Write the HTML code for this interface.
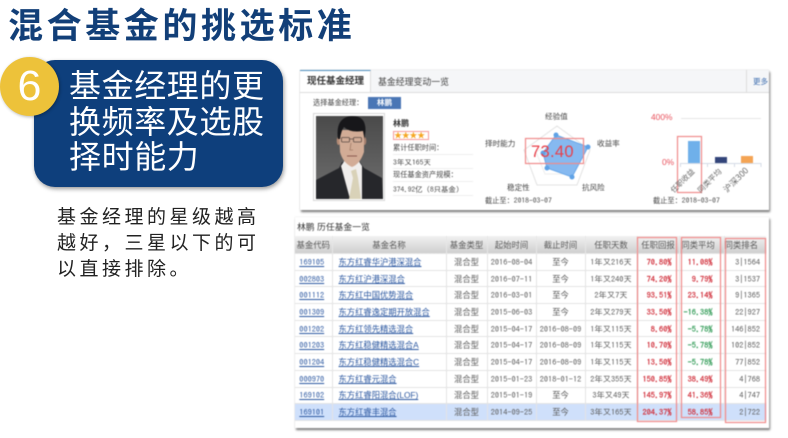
<!DOCTYPE html>
<html lang="zh-CN">
<head>
<meta charset="utf-8">
<title>混合基金的挑选标准</title>
<style>
html,body{margin:0;padding:0;background:#fff}
#s{position:relative;width:788px;height:438px;overflow:hidden;background:#fff;font-family:"Liberation Sans","Noto Sans CJK SC",sans-serif}
.a{position:absolute;white-space:nowrap}
#title{left:8px;top:4px;font-size:35px;line-height:46px;font-weight:700;letter-spacing:3.6px;color:#123f78}
#box{left:34px;top:60px;width:249px;height:127px;border-radius:21px;background:#0e3f7c;box-shadow:1px 2px 4px rgba(0,0,0,.4)}
#circle{left:0;top:57px;width:59px;height:59px;border-radius:50%;background:#edc23a;box-shadow:1px 1px 3px rgba(0,0,0,.3);color:#fff;font-size:43px;line-height:58px;text-align:center}
#head{left:69px;top:69px;font-size:32px;line-height:35.7px;color:#fff;letter-spacing:.6px;font-weight:400}
#desc{left:57px;top:205px;font-size:19px;line-height:26px;letter-spacing:3.5px;color:#222}
#p1{left:300px;top:70px;width:469px;height:140px;background:#fff;box-shadow:0 0 1px #bbb,1px 2px 2px rgba(0,0,0,.55);filter:blur(.4px);overflow:hidden}
#p1 .a{font-size:7.6px;color:#444;line-height:12px}
#tabs{left:0;top:0;width:469px;height:22px;background:#f5f6f8;border-bottom:1px solid #ddd}
#tab{left:0;top:0;width:71px;height:22px;background:#fff;border-top:1px solid #4f8fc0;border-right:1px solid #ddd;box-sizing:border-box}
#p2{left:295px;top:217px;width:474px;height:211px;background:#fff;box-shadow:0 0 1px #ccc,1px 2px 2px rgba(0,0,0,.55);filter:blur(.4px);overflow:hidden}
table{position:absolute;left:0;top:19px;border-collapse:collapse;table-layout:fixed;width:471px;font-size:8.3px;color:#5a5a5a}
th{height:17px;padding:0;font-weight:400;color:#5a5a5a;background:linear-gradient(#f2f2f2,#cfcfcf);border-right:1px solid #e6e6e6;font-size:8.4px}
td{height:15.7px;padding:0;border:1px solid #e4e4e4;border-left:0;text-align:center;overflow:hidden;white-space:nowrap}
td:last-child,th:last-child{border-right:0}
.n{font-family:"IPAGothic","Noto Sans CJK SC",monospace}
.l{color:#2b57a0;text-decoration:underline}
.c{padding-right:3px}
.nm{text-align:left;padding-left:6px}
.r{text-align:right;font-family:"IPAGothic","Noto Sans CJK SC",monospace;color:#d02c38;font-weight:400;-webkit-text-stroke:.2px currentColor}
.r1{padding-right:7px}.r2{padding-right:11px}
.g{color:#2f9a55}
.k{text-align:right;padding-right:6px;font-family:"IPAGothic",monospace}
.sel td{background:#cfe0fb}
svg{position:absolute;left:0;top:0}
svg text{font-family:"Noto Sans CJK SC",sans-serif}
</style>
</head>
<body>
<div id="s">
<div class="a" id="title">混合基金的挑选标准</div>
<div class="a" id="box"></div>
<div class="a" id="circle">6</div>
<div class="a" id="head">基金经理的更<br>换频率及选股<br>择时能力</div>
<div class="a" id="desc">基金经理的星级越高<br>越好，三星以下的可<br>以直接排除。</div>

<div class="a" id="p1">
  <div class="a" id="tabs"></div>
  <div class="a" id="tab"></div>
  <div class="a" style="left:7px;top:6px;font-weight:700;color:#333;font-size:9.5px">现任基金经理</div>
  <div class="a" style="left:78px;top:6px;font-size:8.9px">基金经理变动一览</div>
  <div class="a" style="left:446px;top:0;width:1px;height:22px;background:#ddd"></div>
  <div class="a" style="left:453px;top:6px;color:#3f6fb0;font-size:7.5px">更多</div>
  <div class="a" style="left:13px;top:27px;font-size:7.2px">选择基金经理：</div>
  <div class="a" style="left:68px;top:27px;width:33px;height:12px;background:#4a76b5;color:#fff;font-weight:700;text-align:center">林鹏</div>
  <div class="a" style="left:93px;top:48px;font-weight:700;color:#333;font-size:8px">林鹏</div>
  <div class="a" style="left:93px;top:61px;width:36px;height:9px;border:1px solid #f59a9a;box-sizing:border-box;color:#f5a623;font-size:8px;line-height:7px;letter-spacing:-.3px;overflow:hidden">★★★★</div>
  <div class="a" style="left:93px;top:72px;font-size:7.2px">累计任职时间：</div>
  <div class="a n" style="left:93px;top:86px;font-size:7.6px">3年又165天</div>
  <div class="a" style="left:93px;top:99px;font-size:7.2px">现任基金资产规模：</div>
  <div class="a n" style="left:93px;top:113px;font-size:7.4px">374.92亿 (8只基金)</div>
  <div class="a" style="left:93px;top:84px;width:80px;height:1px;background:#eee"></div>
  <div class="a" style="left:93px;top:98px;width:80px;height:1px;background:#eee"></div>
  <div class="a" style="left:93px;top:111px;width:80px;height:1px;background:#eee"></div>
  <div class="a" style="left:93px;top:125px;width:80px;height:1px;background:#eee"></div>
  <div class="a" style="left:245px;top:41px">经验值</div>
  <div class="a" style="left:297px;top:68px">收益率</div>
  <div class="a" style="left:282px;top:112px">抗风险</div>
  <div class="a" style="left:207px;top:112px">稳定性</div>
  <div class="a" style="left:185px;top:68px">择时能力</div>
  <div class="a" style="left:185px;top:124px;font-size:7.2px">截止至：<span class="n" style="font-size:7.6px">2018-03-07</span></div>
  <div class="a" style="left:353px;top:124px;font-size:7.2px">截止至：<span class="n" style="font-size:7.6px">2018-03-07</span></div>
  <div class="a" style="left:351px;top:41px;color:#e8505b;font-size:8.4px">400%</div>
  <div class="a" style="left:362px;top:86px;color:#e8505b;font-size:8.4px">0%</div>
</div>

<div class="a" id="p2">
  <div class="a" style="left:2px;top:3px;font-size:8.8px;line-height:15px;color:#333">林鹏 历任基金一览</div>
  <table>
    <colgroup><col style="width:37px"><col style="width:114px"><col style="width:41px"><col style="width:49px"><col style="width:49px"><col style="width:52px"><col style="width:42px"><col style="width:45px"><col style="width:42px"></colgroup>
    <tr><th>基金代码</th><th>基金名称</th><th>基金类型</th><th>起始时间</th><th>截止时间</th><th>任职天数</th><th>任职回报</th><th style="padding-right:7px">同类平均</th><th style="padding-right:12px">同类排名</th></tr>
    <tr><td class="n l c">169105</td><td class="nm l">东方红睿华沪港深混合</td><td>混合型</td><td class="n">2016-08-04</td><td>至今</td><td class="n">1年又216天</td><td class="r r1">70.80%</td><td class="r r2">11.08%</td><td class="k">3|1564</td></tr>
    <tr><td class="n l c">002803</td><td class="nm l">东方红沪港深混合</td><td>混合型</td><td class="n">2016-07-11</td><td>至今</td><td class="n">1年又240天</td><td class="r r1">74.20%</td><td class="r r2">9.79%</td><td class="k">3|1537</td></tr>
    <tr><td class="n l c">001112</td><td class="nm l">东方红中国优势混合</td><td>混合型</td><td class="n">2016-03-01</td><td>至今</td><td class="n">2年又7天</td><td class="r r1">93.51%</td><td class="r r2">23.14%</td><td class="k">9|1365</td></tr>
    <tr><td class="n l c">001309</td><td class="nm l">东方红睿逸定期开放混合</td><td>混合型</td><td class="n">2015-06-03</td><td>至今</td><td class="n">2年又279天</td><td class="r r1">33.50%</td><td class="r r2 g">-16.38%</td><td class="k">22|927</td></tr>
    <tr><td class="n l c">001202</td><td class="nm l">东方红领先精选混合</td><td>混合型</td><td class="n">2015-04-17</td><td class="n">2016-08-09</td><td class="n">1年又115天</td><td class="r r1">8.60%</td><td class="r r2 g">-5.78%</td><td class="k">146|852</td></tr>
    <tr><td class="n l c">001203</td><td class="nm l">东方红稳健精选混合A</td><td>混合型</td><td class="n">2015-04-17</td><td class="n">2016-08-09</td><td class="n">1年又115天</td><td class="r r1">10.70%</td><td class="r r2 g">-5.78%</td><td class="k">102|852</td></tr>
    <tr><td class="n l c">001204</td><td class="nm l">东方红稳健精选混合C</td><td>混合型</td><td class="n">2015-04-17</td><td class="n">2016-08-09</td><td class="n">1年又115天</td><td class="r r1">13.50%</td><td class="r r2 g">-5.78%</td><td class="k">77|852</td></tr>
    <tr><td class="n l c">000970</td><td class="nm l">东方红睿元混合</td><td>混合型</td><td class="n">2015-01-23</td><td class="n">2018-01-12</td><td class="n">2年又355天</td><td class="r r1">150.85%</td><td class="r r2">38.49%</td><td class="k">4|768</td></tr>
    <tr><td class="n l c">169102</td><td class="nm l">东方红睿阳混合(LOF)</td><td>混合型</td><td class="n">2015-01-19</td><td>至今</td><td class="n">3年又49天</td><td class="r r1">145.97%</td><td class="r r2">41.36%</td><td class="k">4|747</td></tr>
    <tr class="sel"><td class="n l c">169101</td><td class="nm l">东方红睿丰混合</td><td>混合型</td><td class="n">2014-09-25</td><td>至今</td><td class="n">3年又165天</td><td class="r r1">204.37%</td><td class="r r2">58.85%</td><td class="k">2|722</td></tr>
  </table>
</div>

<svg width="788" height="438" viewBox="0 0 788 438" style="filter:blur(.4px)">
  <!-- portrait frame -->
  <rect x="313.500" y="113.500" width="71" height="87" fill="#fff" stroke="#d8d8d8"/>
  <defs><linearGradient id="bg" x1="0" y1="0" x2="0" y2="1"><stop offset="0" stop-color="#4a4a4a"/><stop offset="1" stop-color="#707070"/></linearGradient></defs>
  <rect x="316" y="116" width="67" height="83" fill="url(#bg)"/>
  <path d="M316 199V180L339 168L342 162H360L364 168L382 178L383 199Z" fill="#26272b"/>
  <path d="M341 166L350 199H362L362 166L358 160H345Z" fill="#f0eeec"/>
  <path d="M351 171L356 169L358 178L361 199H349L353 178Z" fill="#d9d2b8"/>
  <ellipse cx="338.500" cy="141" rx="1.800" ry="4" fill="#b48c76"/><ellipse cx="364.500" cy="141" rx="1.800" ry="4" fill="#a88270"/>
  <path d="M339 130H364L364 152Q360 164 352 167Q343 163 340 152Z" fill="#d2ac96"/>
  <path d="M338 139Q335 118 351 116Q366 115 365.500 131L364.500 139L363 131Q350 133 344 127Q341 131 340 139Z" fill="#17171a"/>
  <rect x="341.500" y="137.500" width="8" height="4.500" rx="1" fill="none" stroke="#5a4a44" stroke-width=".8"/>
  <rect x="353.500" y="137.500" width="8" height="4.500" rx="1" fill="none" stroke="#5a4a44" stroke-width=".8"/>
  <path d="M349.500 139H353.500" stroke="#5a4a44" stroke-width=".7"/>
  <path d="M351 143L350 150H353" stroke="#a27c68" stroke-width=".8" fill="none"/>
  <path d="M347 156H357" stroke="#8b5b50" stroke-width="1"/>
  <!-- radar -->
  <path d="M557 126L590 150L577 185L537 185L524 150Z" fill="#fff" stroke="#e2e2e2"/>
  <path d="M557 140L576 152L569 174L545 174L536 152Z" fill="none" stroke="#eee"/>
  <path d="M556 135L588 147L572 177L547 168L543 153Z" fill="#86b9f0" stroke="#6aa7e8"/>
  <circle cx="556" cy="135" r="2.500" fill="#5fa2e6"/><circle cx="588" cy="147" r="2.500" fill="#5fa2e6"/><circle cx="572" cy="177" r="2.500" fill="#5fa2e6"/><circle cx="547" cy="168" r="2.500" fill="#5fa2e6"/><circle cx="543" cy="153" r="2.500" fill="#5fa2e6"/>
  <rect x="525.500" y="138.500" width="58" height="25" fill="none" stroke="#f08a8a" stroke-width="1.200"/>
  <text x="531" y="157" font-size="16.500" fill="#e8404a" letter-spacing=".3" style="font-family:'Liberation Sans',sans-serif">73.40</text>
  <!-- bars -->
  <path d="M681 118.500H761" stroke="#e6e6e6"/>
  <path d="M680 163.500H761M680.500 163V167M707.500 163V167M734.500 163V167M761 163V167" stroke="#d5dbe6" fill="none"/>
  <rect x="688" y="141" width="12" height="22" fill="#6fb0ea"/>
  <rect x="715" y="157" width="12" height="6" fill="#33457a"/>
  <rect x="741" y="156" width="12" height="7" fill="#f4a454"/>
  <rect x="677.500" y="136.500" width="24" height="56" fill="none" stroke="#f08a8a" stroke-width="1.200"/>
  <text transform="translate(695 172) rotate(-45)" text-anchor="end" font-size="7.500" fill="#666">任职收益</text>
  <text transform="translate(722 172) rotate(-45)" text-anchor="end" font-size="7.500" fill="#666">同类平均</text>
  <text transform="translate(749 171) rotate(-45)" text-anchor="end" font-size="8.500" fill="#666">沪深300</text>
  <!-- table highlights -->
  <rect x="637.500" y="237.500" width="39" height="184" fill="none" stroke="#f08a8a" stroke-width="1.200"/>
  <rect x="681.500" y="237.500" width="39" height="180" fill="none" stroke="#f08a8a" stroke-width="1.200"/>
  <rect x="725.500" y="238.500" width="40" height="184" fill="none" stroke="#f08a8a" stroke-width="1.200"/>
</svg>
</div>
</body>
</html>
